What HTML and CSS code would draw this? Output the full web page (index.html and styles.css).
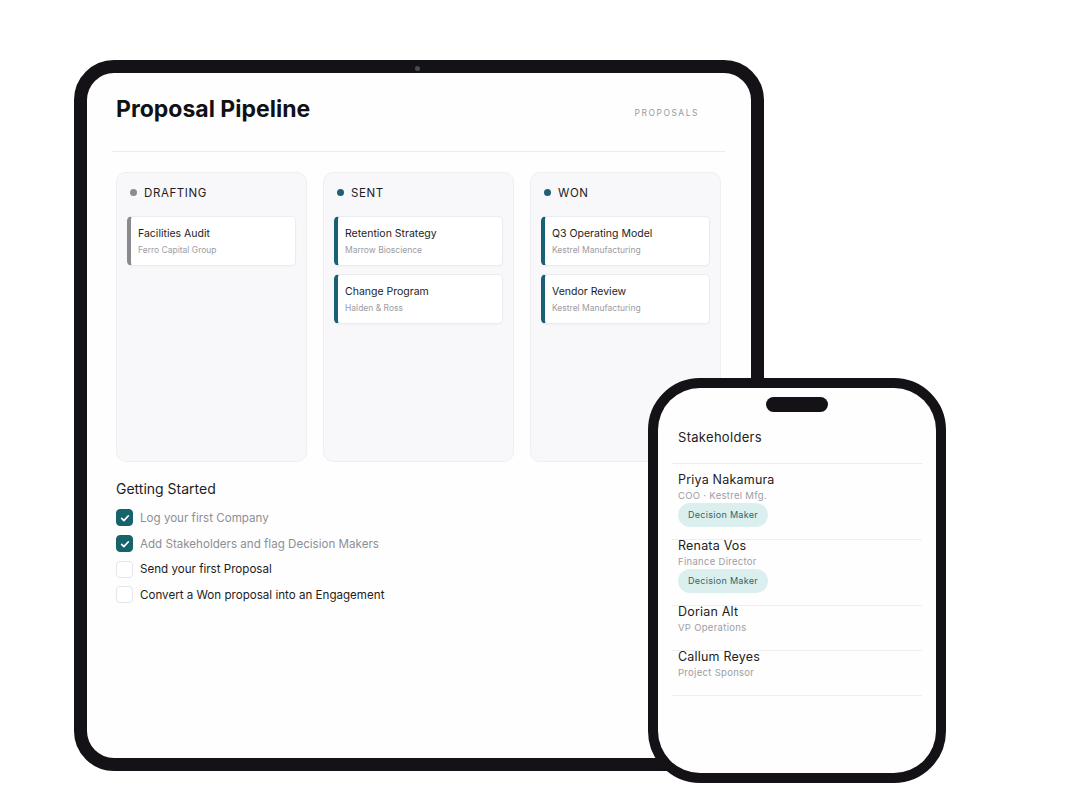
FILE: index.html
```html
<!DOCTYPE html>
<html lang="en">
<head>
    <meta charset="UTF-8">
    <title>Proposal Pipeline</title>
    <link rel="stylesheet" href="styles.css">
</head>
<body>
    <div class="stage">
        <!-- Tablet: pipeline board -->
        <div class="tablet">
            <span class="camera"></span>
            <div class="screen">
                <div class="header">
                    <h1>Proposal Pipeline</h1>
                    <span class="tag">PROPOSALS</span>
                </div>
                <div class="divider"></div>

                <div class="board">
                    <div class="column">
                        <div class="column-head"><span class="dot grey"></span>DRAFTING</div>
                        <div class="card grey">
                            <div class="card-title">Facilities Audit</div>
                            <div class="card-sub">Ferro Capital Group</div>
                        </div>
                    </div>
                    <div class="column">
                        <div class="column-head"><span class="dot"></span>SENT</div>
                        <div class="card">
                            <div class="card-title">Retention Strategy</div>
                            <div class="card-sub">Marrow Bioscience</div>
                        </div>
                        <div class="card">
                            <div class="card-title">Change Program</div>
                            <div class="card-sub">Halden &amp; Ross</div>
                        </div>
                    </div>
                    <div class="column">
                        <div class="column-head"><span class="dot"></span>WON</div>
                        <div class="card">
                            <div class="card-title">Q3 Operating Model</div>
                            <div class="card-sub">Kestrel Manufacturing</div>
                        </div>
                        <div class="card">
                            <div class="card-title">Vendor Review</div>
                            <div class="card-sub">Kestrel Manufacturing</div>
                        </div>
                    </div>
                </div>

                <h2>Getting Started</h2>
                <ul class="checklist">
                    <li class="done"><span class="box"><svg viewBox="0 0 16 16" width="12" height="12"><path d="M3.5 8.5l3 3 6-6.5" fill="none" stroke="#fff" stroke-width="2.2" stroke-linecap="round" stroke-linejoin="round"/></svg></span>Log your first Company</li>
                    <li class="done"><span class="box"><svg viewBox="0 0 16 16" width="12" height="12"><path d="M3.5 8.5l3 3 6-6.5" fill="none" stroke="#fff" stroke-width="2.2" stroke-linecap="round" stroke-linejoin="round"/></svg></span>Add Stakeholders and flag Decision Makers</li>
                    <li><span class="box"></span>Send your first Proposal</li>
                    <li><span class="box"></span>Convert a Won proposal into an Engagement</li>
                </ul>
            </div>
        </div>

        <!-- Phone: stakeholder list -->
        <div class="phone">
            <div class="phone-screen">
                <div class="notch"></div>
                <div class="phone-head">Stakeholders</div>
                <div class="person">
                    <div class="name">Priya Nakamura</div>
                    <div class="role">COO · Kestrel Mfg.</div>
                    <span class="badge">Decision Maker</span>
                </div>
                <div class="person">
                    <div class="name">Renata Vos</div>
                    <div class="role">Finance Director</div>
                    <span class="badge">Decision Maker</span>
                </div>
                <div class="person">
                    <div class="name">Dorian Alt</div>
                    <div class="role">VP Operations</div>
                </div>
                <div class="person">
                    <div class="name">Callum Reyes</div>
                    <div class="role">Project Sponsor</div>
                </div>
            </div>
        </div>
    </div>
</body>
</html>
```

FILE: styles.css
```css
body {
    margin: 0;
    background-color: #ffffff;
    font-family: 'Inter', 'Liberation Sans', sans-serif;
    color: #1c1c21;
}

.stage {
    position: relative;
    width: 1080px;
    height: 810px;
    padding: 60px 0 0 74px;
    box-sizing: border-box;
}

/* ---------- tablet ---------- */

.tablet {
    position: relative;
    width: 690px;
    height: 711px;
    box-sizing: border-box;
    border: 13px solid #141217;
    border-radius: 40px;
    background-color: #141217;
}

.camera {
    position: absolute;
    top: -7px;
    left: 328px;
    width: 5px;
    height: 5px;
    border-radius: 50%;
    background-color: #4a4a50;
}

.screen {
    height: 100%;
    box-sizing: border-box;
    padding: 22px 30px 0 29px;
    background-color: #fefefe;
    border-radius: 27px;
}

.header {
    display: flex;
    justify-content: space-between;
    align-items: center;
    padding-right: 22px;
}

h1 {
    margin: 0;
    font-size: 23px;
    line-height: 28px;
    font-weight: 700;
    color: #111114;
}

.tag {
    margin-top: 7px;
    font-size: 8.5px;
    letter-spacing: 1.5px;
    color: #9a9aa0;
}

.divider {
    height: 1px;
    margin: 28px -4px 20px;
    background-color: #ebebee;
}

.board {
    display: grid;
    grid-template-columns: repeat(3, 191px);
    gap: 16px;
}

.column {
    height: 290px;
    box-sizing: border-box;
    padding: 0 10px;
    background-color: #f8f7fa;
    border: 1px solid #efeff2;
    border-radius: 10px;
}

.column-head {
    display: flex;
    align-items: center;
    gap: 7px;
    height: 39px;
    margin-bottom: 4px;
    padding-left: 3px;
    font-size: 11.5px;
    letter-spacing: 0.6px;
    color: #1d1d22;
}

.dot {
    width: 7px;
    height: 7px;
    border-radius: 50%;
    background-color: #1d6078;
}

.dot.grey {
    background-color: #8c8c90;
}

.card {
    height: 50px;
    box-sizing: border-box;
    margin-bottom: 8px;
    padding: 10px 0 0 7px;
    background-color: #ffffff;
    border: 1px solid #ececf0;
    border-left: 4px solid #1b5f74;
    border-radius: 5px;
    box-shadow: 0 1px 2px rgba(0, 0, 0, 0.03);
}

.card.grey {
    border-left-color: #8a8a8e;
}

.card-title {
    font-size: 10.5px;
    line-height: 14px;
    color: #1d1d22;
}

.card-sub {
    margin-top: 3px;
    font-size: 8.5px;
    line-height: 12px;
    color: #9c9ca3;
}

h2 {
    margin: 18px 0 7px;
    font-size: 14px;
    line-height: 18px;
    font-weight: 400;
    color: #1d1d22;
}

.checklist {
    list-style: none;
    margin: 0;
    padding: 0;
}

.checklist li {
    display: flex;
    align-items: center;
    gap: 7px;
    height: 25.7px;
    font-size: 11.6px;
    color: #1d1d22;
}

.checklist li.done {
    color: #8e8e95;
}

.box {
    display: flex;
    align-items: center;
    justify-content: center;
    width: 17px;
    height: 17px;
    box-sizing: border-box;
    border: 1px solid #e6e6ea;
    border-radius: 4px;
    background-color: #ffffff;
}

.done .box {
    border-color: #17636b;
    background-color: #17636b;
}

/* ---------- phone ---------- */

.phone {
    position: absolute;
    left: 648px;
    top: 378px;
    width: 298px;
    height: 405px;
    box-sizing: border-box;
    border: 10px solid #141217;
    border-radius: 52px;
    background-color: #141217;
}

.phone-screen {
    height: 100%;
    box-sizing: border-box;
    padding: 9px 14px 0;
    background-color: #fefefe;
    border-radius: 42px;
}

.notch {
    width: 62px;
    height: 15px;
    margin: 0 auto;
    border-radius: 8px;
    background-color: #141217;
}

.phone-head {
    padding: 15px 6px 16px;
    margin-bottom: 10px;
    font-size: 13px;
    line-height: 20px;
    letter-spacing: 0.3px;
    color: #1d1d22;
    border-bottom: 1px solid #ececef;
}

.person {
    padding: 0 6px 16px;
    border-bottom: 1px solid #efeff2;
}

.name {
    font-size: 12.5px;
    line-height: 12px;
    letter-spacing: 0.2px;
    color: #1d1d22;
}

.role {
    margin-top: 3px;
    font-size: 9.5px;
    line-height: 13px;
    letter-spacing: 0.3px;
    color: #9d9da4;
}

.badge {
    display: block;
    width: fit-content;
    margin-top: 1px;
    margin-bottom: -4px;
    padding: 0 10px;
    height: 24px;
    line-height: 24px;
    border-radius: 12px;
    background-color: #dcefef;
    font-size: 9px;
    letter-spacing: 0.3px;
    color: #1d6a6c;
}
```
